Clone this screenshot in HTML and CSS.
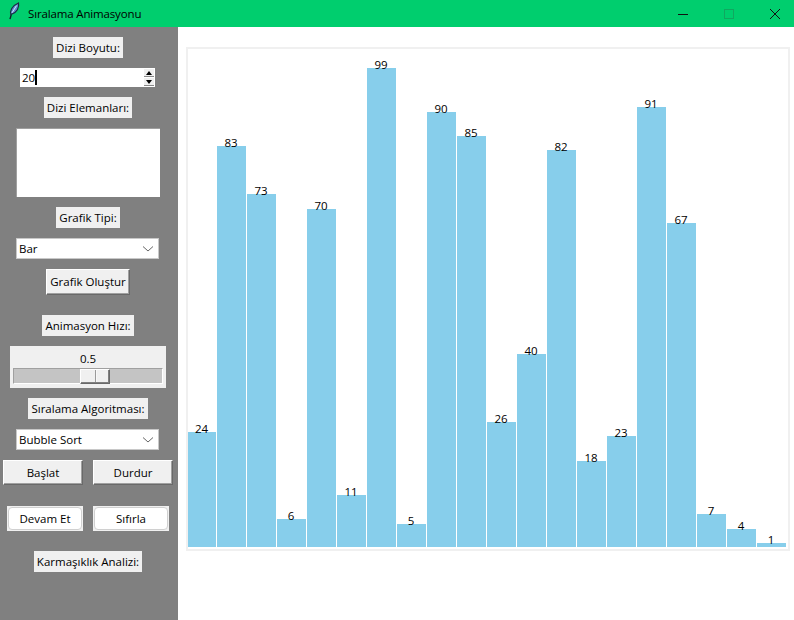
FILE: index.html
```html
<!DOCTYPE html>
<html lang="tr">
<head>
    <meta charset="UTF-8">
    <title>Sıralama Animasyonu</title>
    <link rel="stylesheet" href="styles.css">
</head>
<body>
    <div class="titlebar">
        <svg class="feather" width="14" height="18" viewBox="0 0 14 20" preserveAspectRatio="none">
            <path d="M3 19 L4.5 13" stroke="#10202a" stroke-width="1.4" fill="none"/>
            <path d="M4 14 C2.5 10 5 4 11.5 1 C12.5 6 10 12 4 14 Z" fill="#5b8fd0" stroke="#1c2c44" stroke-width="1.2"/>
            <path d="M5 12 L9.5 4" stroke="#dfeafa" stroke-width="1" fill="none"/>
        </svg>
        <span class="title">Sıralama Animasyonu</span>
        <div class="winbtns">
            <svg width="12" height="12" viewBox="0 0 12 12"><path d="M1 6.5 H11" stroke="#111" stroke-width="1" fill="none"/></svg>
            <svg width="12" height="12" viewBox="0 0 12 12"><rect x="1.5" y="1.5" width="9" height="9" stroke="#10a860" stroke-width="1" fill="none"/></svg>
            <svg width="12" height="12" viewBox="0 0 12 12"><path d="M1 1 L11 11 M11 1 L1 11" stroke="#111" stroke-width="1" fill="none"/></svg>
        </div>
    </div>

    <div class="main">
        <div class="sidebar">
            <div class="label">Dizi Boyutu:</div>
            <div class="spinbox">
                <span class="spin-value">20</span><span class="caret"></span>
                <div class="spin-arrows">
                    <div class="spin-btn"><span class="arrow-up"></span></div>
                    <div class="spin-btn"><span class="arrow-down"></span></div>
                </div>
            </div>
            <div class="label">Dizi Elemanları:</div>
            <div class="textbox"></div>
            <div class="label">Grafik Tipi:</div>
            <div class="combo">
                <span>Bar</span>
                <svg width="12" height="6" viewBox="0 0 12 6"><path d="M1 0.5 L6 5 L11 0.5" stroke="#666" stroke-width="1" fill="none"/></svg>
            </div>
            <div class="btn btn-graph">Grafik Oluştur</div>
            <div class="label push">Animasyon Hızı:</div>
            <div class="scale">
                <div class="scale-value">0.5</div>
                <div class="trough">
                    <div class="thumb"></div>
                </div>
            </div>
            <div class="label">Sıralama Algoritması:</div>
            <div class="combo">
                <span>Bubble Sort</span>
                <svg width="12" height="6" viewBox="0 0 12 6"><path d="M1 0.5 L6 5 L11 0.5" stroke="#666" stroke-width="1" fill="none"/></svg>
            </div>
            <div class="btn-row">
                <div class="btn btn-wide">Başlat</div>
                <div class="btn btn-wide">Durdur</div>
            </div>
            <div class="btn-row push-more">
                <div class="btn-soft"><span>Devam Et</span></div>
                <div class="btn-soft"><span>Sıfırla</span></div>
            </div>
            <div class="label push">Karmaşıklık Analizi:</div>
        </div>

        <div class="content">
            <div class="chart">
                <div class="bar-col"><span class="val">24</span><div class="bar" style="height:115px"></div></div>
                <div class="bar-col"><span class="val">83</span><div class="bar" style="height:401px"></div></div>
                <div class="bar-col"><span class="val">73</span><div class="bar" style="height:353px"></div></div>
                <div class="bar-col"><span class="val">6</span><div class="bar" style="height:28px"></div></div>
                <div class="bar-col"><span class="val">70</span><div class="bar" style="height:338px"></div></div>
                <div class="bar-col"><span class="val">11</span><div class="bar" style="height:52px"></div></div>
                <div class="bar-col"><span class="val">99</span><div class="bar" style="height:479px"></div></div>
                <div class="bar-col"><span class="val">5</span><div class="bar" style="height:23px"></div></div>
                <div class="bar-col"><span class="val">90</span><div class="bar" style="height:435px"></div></div>
                <div class="bar-col"><span class="val">85</span><div class="bar" style="height:411px"></div></div>
                <div class="bar-col"><span class="val">26</span><div class="bar" style="height:125px"></div></div>
                <div class="bar-col"><span class="val">40</span><div class="bar" style="height:193px"></div></div>
                <div class="bar-col"><span class="val">82</span><div class="bar" style="height:397px"></div></div>
                <div class="bar-col"><span class="val">18</span><div class="bar" style="height:86px"></div></div>
                <div class="bar-col"><span class="val">23</span><div class="bar" style="height:111px"></div></div>
                <div class="bar-col"><span class="val">91</span><div class="bar" style="height:440px"></div></div>
                <div class="bar-col"><span class="val">67</span><div class="bar" style="height:324px"></div></div>
                <div class="bar-col"><span class="val">7</span><div class="bar" style="height:33px"></div></div>
                <div class="bar-col"><span class="val">4</span><div class="bar" style="height:18px"></div></div>
                <div class="bar-col"><span class="val">1</span><div class="bar" style="height:4px"></div></div>
            </div>
        </div>
    </div>
</body>
</html>
```

FILE: styles.css
```css
body { margin: 0; width: 794px; height: 620px; overflow: hidden; background: white; font-family: "Open Sans", "Noto Sans", sans-serif; font-size: 11.5px; color: black; }

.titlebar { height: 27px; background-color: #00ce6e; display: flex; align-items: center; }
.feather { margin-left: 7px; margin-bottom: 5px; flex: none; }
.title { margin-left: 7px; letter-spacing: -0.15px; }
.winbtns { margin-left: auto; display: flex; gap: 34px; margin-right: 13px; }

.main { display: flex; height: 593px; }
.sidebar { width: 178px; flex: none; background-color: #808080; padding: 10px 2px 0 0; box-sizing: border-box; display: flex; flex-direction: column; align-items: center; gap: 10px; }

.label { height: 21px; line-height: 21px; padding: 0 3px; background-color: #f0f0f0; white-space: nowrap; }
.push { margin-top: 10px; }
.push-more { margin-top: 11px; }

.spinbox { width: 135px; height: 19px; margin-left: -1px; box-sizing: border-box; background: white; display: flex; align-items: center; padding-left: 2px; }
.spin-value { line-height: 19px; }
.caret { width: 2px; height: 15px; background: black; }
.spin-arrows { margin-left: auto; width: 11px; height: 19px; padding: 1px 1px 1px 0; box-sizing: border-box; display: flex; flex-direction: column; gap: 1px; }
.spin-btn { flex: 1; background: #f0f0f0; border-bottom: 1px solid #888; display: flex; align-items: center; justify-content: center; }
.arrow-up { border-left: 3px solid transparent; border-right: 3px solid transparent; border-bottom: 4px solid black; }
.arrow-down { border-left: 3px solid transparent; border-right: 3px solid transparent; border-top: 4px solid black; }

.textbox { width: 144px; height: 69px; box-sizing: border-box; background: white; border-top: 1px solid #a0a0a0; border-left: 1px solid #a0a0a0; }

.combo { width: 143px; height: 21px; margin-left: -1px; box-sizing: border-box; background: white; display: flex; align-items: center; justify-content: space-between; padding: 0 3px 0 2px; border: 1px solid #c8c8c8; }
.combo svg { margin-right: 1px; }

.btn { height: 25px; line-height: 23px; box-sizing: border-box; text-align: center; background-color: #f0f0f0; border: 1px solid; border-color: white #696969 #696969 white; box-shadow: inset -1px -1px 0 #a0a0a0; }
.btn-graph { width: 84px; height: 26px; line-height: 24px; }
.btn-wide { width: 80px; }

.btn-row { display: flex; justify-content: center; gap: 10px; }
.btn-soft { width: 76px; height: 25px; box-sizing: border-box; background-color: #f0f0f0; padding: 1px; }
.btn-soft span { display: block; height: 23px; line-height: 21px; box-sizing: border-box; text-align: center; background: white; border: 1px solid #d0d0d0; border-radius: 4px; }

.scale { width: 156px; height: 42px; background-color: #f0f0f0; box-sizing: border-box; padding: 3px 3px 4px; }
.scale-value { height: 19px; line-height: 19px; text-align: center; }
.trough { height: 16px; box-sizing: border-box; background-color: #c4c4c4; border: 1px solid; border-color: #a0a0a0 white white #a0a0a0; padding-left: 66px; }
.thumb { width: 30px; height: 15px; box-sizing: border-box; background: linear-gradient(to right, #f0f0f0 14px, #9a9a9a 14px, #9a9a9a 15px, white 15px, #f0f0f0 16px); border: 1px solid; border-color: white #696969 #696969 white; box-shadow: inset -1px -1px 0 #808080; }

.content { flex: 1; padding: 20px 4px 0 8px; }
.chart { width: 604px; height: 504px; box-sizing: border-box; border: 2px solid #f0f0f0; background: white; display: flex; align-items: flex-end; gap: 1px; padding: 0 3px 2px 0; }
.bar-col { width: 29px; flex: none; display: flex; flex-direction: column; align-items: center; }
.val { height: 16px; line-height: 16px; margin: 0 1px -5px 0; position: relative; }
.bar { width: 100%; background-color: skyblue; }
.bar-col:first-child { width: 28px; }
```
